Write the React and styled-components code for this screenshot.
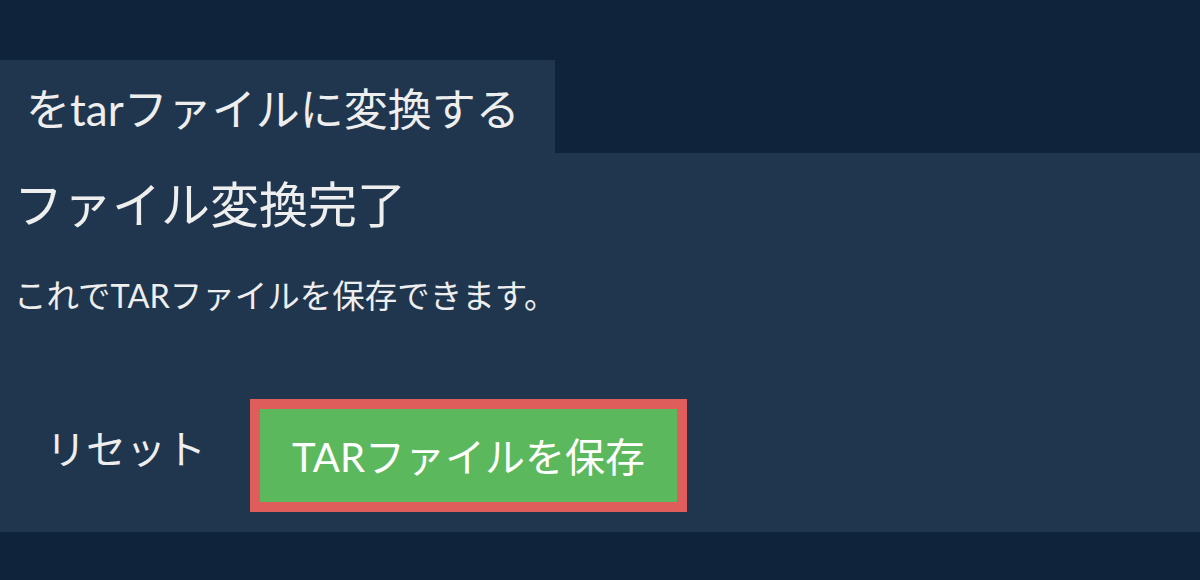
import React from "react";
import styled, { createGlobalStyle } from "styled-components";

const GlobalStyle = createGlobalStyle`
  html, body {
    margin: 0;
    padding: 0;
    background: #0f233a;
  }
  body {
    font-family: Lato, "Noto Sans CJK JP", sans-serif;
    color: #eeeeee;
  }
`;

const Page = styled.div`
  padding-top: 60px;
  height: 580px;
  box-sizing: border-box;
`;

const Tab = styled.div`
  width: 555px;
  height: 93px;
  box-sizing: border-box;
  padding-left: 26px;
  display: flex;
  align-items: center;
  background: #20364e;
  font-size: 44px;
  white-space: nowrap;
`;

const Panel = styled.section`
  height: 379px;
  box-sizing: border-box;
  padding: 22px 14px 0;
  background: #20364e;
  display: flex;
  flex-direction: column;
`;

const Heading = styled.h2`
  margin: 0;
  font-size: 49px;
  font-weight: 400;
  line-height: 1.2;
`;

const Message = styled.p`
  margin: 42px 0 0;
  font-size: 32.5px;
  line-height: 1.2;
`;

const Actions = styled.div`
  margin-top: 84px;
  display: flex;
  align-items: center;
  gap: 12px;
`;

const Button = styled.button`
  font-family: inherit;
  font-size: 40px;
  color: ${(p) => (p.$primary ? "#ffffff" : "#eeeeee")};
  background: ${(p) => (p.$primary ? "#5cb85c" : "transparent")};
  border: 10px solid ${(p) => (p.$primary ? "#df5d5b" : "transparent")};
  height: 113px;
  padding: ${(p) => (p.$primary ? "0 32px" : "0 22px 16px")};
  cursor: pointer;
  white-space: nowrap;
`;

export default function App() {
  return (
    <>
      <GlobalStyle />
      <Page>
        <Tab>をtarファイルに変換する</Tab>
        <Panel>
          <Heading>ファイル変換完了</Heading>
          <Message>これでTARファイルを保存できます。</Message>
          <Actions>
            <Button>リセット</Button>
            <Button $primary>TARファイルを保存</Button>
          </Actions>
        </Panel>
      </Page>
    </>
  );
}
